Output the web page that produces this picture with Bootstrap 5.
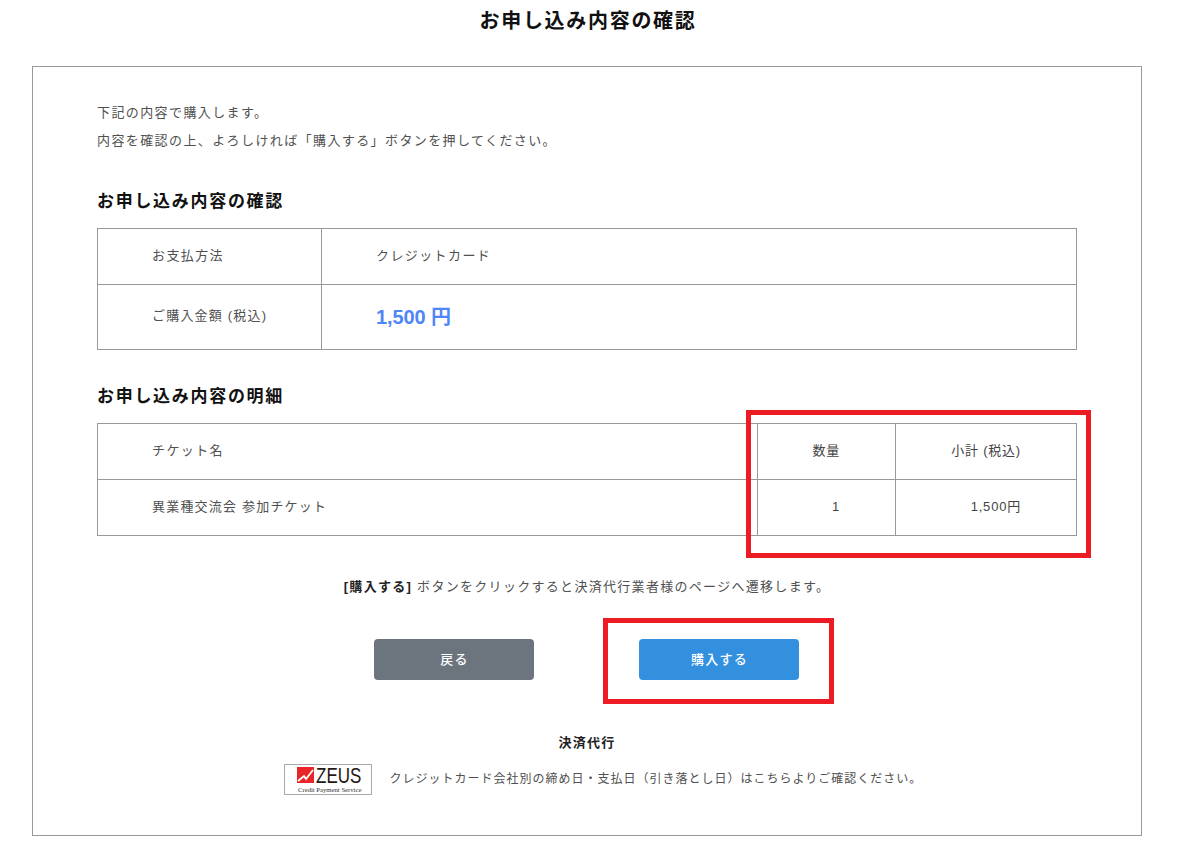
<!DOCTYPE html>
<html lang="ja">
<head>
    <meta charset="UTF-8">
    <meta name="viewport" content="width=device-width, initial-scale=1.0">
    <title>お申し込み内容の確認</title>
    <link rel="stylesheet" href="https://cdn.jsdelivr.net/npm/bootstrap@5.3.0/dist/css/bootstrap.min.css">
    <style>
        body {
            font-family: "Liberation Sans", "Noto Sans CJK JP", sans-serif;
            font-size: 13px;
            font-weight: 400;
            color: #505050;
            letter-spacing: 1.4px;
            background: #fff;
        }
        .page-wrap { position: relative; width: 1110px; margin-left: 32px; padding-top: 6px; }
        .page-title {
            font-size: 20px;
            font-weight: 700;
            color: #111;
            letter-spacing: 1.7px;
            line-height: 30px;
            margin: 0 0 30px;
            padding-left: 2px;
            text-align: center;
        }
        .confirm-box {
            border: 1px solid #999;
            height: 770px;
            padding: 32px 64px 0;
        }
        .intro-text { line-height: 28px; margin: 0; }
        .sec-title {
            font-size: 17px;
            font-weight: 700;
            color: #111;
            letter-spacing: 1.7px;
            line-height: 26px;
            margin: 34px 0 13px;
        }
        .info-table { width: 980px; border-collapse: collapse; table-layout: fixed; margin: 0; }
        .info-table td { border: 1px solid #999; padding: 0 0 2px 54px; height: 56px; vertical-align: middle; }
        .info-table .amount-row td { height: 65px; }
        .info-table td.tight { letter-spacing: 1.2px; }
        .info-table td.amount-cell { padding-bottom: 0; }
        .info-table .num { text-align: right; padding: 0 55px 2px 0; letter-spacing: .8px; color: #444; }
        .amount {
            color: #4f86f7;
            font-size: 20px;
            font-weight: 700;
            letter-spacing: -.1px;
        }
        .note-line { text-align: center; margin: 41px 0 0; line-height: 20px; letter-spacing: 1.3px; }
        .note-line strong { color: #222; }
        .btn-back, .btn-buy {
            width: 160px;
            height: 41px;
            font-size: 13px;
            font-weight: 500;
            letter-spacing: 1.3px;
            color: #fff;
            border: 0;
            border-radius: 4px;
            padding: 0 0 0 2px;
        }
        .btn-back { background: #6c757d; }
        .btn-buy { background: #3390df; }
        .btn-row { gap: 105px; margin-top: 42px; padding-right: 2px; }
        .agent-title { font-weight: 700; color: #222; text-align: center; margin: 53px 0 0; line-height: 20px; letter-spacing: 1.2px; }
        .agent-row { gap: 18px; margin-top: 11px; padding-left: 32px; font-size: 12px; letter-spacing: 1px; }
        .agent-row span { padding-bottom: 2px; }
        .red-frame { position: absolute; border: 5px solid #ed1c24; }
        .frame-table { left: 714px; top: 410px; width: 345px; height: 148px; }
        .frame-btn { left: 571px; top: 618px; width: 231px; height: 86px; }
    </style>
</head>
<body>
    <div class="page-wrap">
        <h1 class="page-title">お申し込み内容の確認</h1>
        <div class="confirm-box">
            <p class="intro-text">下記の内容で購入します。</p>
            <p class="intro-text">内容を確認の上、よろしければ「購入する」ボタンを押してください。</p>

            <h2 class="sec-title">お申し込み内容の確認</h2>
            <table class="info-table">
                <colgroup><col style="width:224px"><col></colgroup>
                <tr><td>お支払方法</td><td>クレジットカード</td></tr>
                <tr class="amount-row"><td class="tight">ご購入金額 (税込)</td><td class="amount-cell"><span class="amount">1,500 円</span></td></tr>
            </table>

            <h2 class="sec-title">お申し込み内容の明細</h2>
            <table class="info-table">
                <colgroup><col><col style="width:138px"><col style="width:181px"></colgroup>
                <tr><td>チケット名</td><td class="num">数量</td><td class="num">小計 (税込)</td></tr>
                <tr><td class="tight">異業種交流会 参加チケット</td><td class="num">1</td><td class="num">1,500円</td></tr>
            </table>

            <p class="note-line"><strong>[購入する]</strong> ボタンをクリックすると決済代行業者様のページへ遷移します。</p>

            <div class="d-flex justify-content-center btn-row">
                <button type="button" class="btn btn-back">戻る</button>
                <button type="button" class="btn btn-buy">購入する</button>
            </div>

            <p class="agent-title">決済代行</p>
            <div class="d-flex justify-content-center align-items-center agent-row">
                <svg width="88" height="31" viewBox="0 0 88 31">
                    <rect x=".5" y=".5" width="87" height="30" fill="#fff" stroke="#aaa"/>
                    <rect x="13" y="3" width="17" height="16" fill="#e8262a"/>
                    <path d="M14 17l6-5 2 3 7-9" fill="none" stroke="#fff" stroke-width="1.8"/>
                    <text transform="translate(32 19) scale(1 1.32)" font-family="Liberation Sans" font-size="17" fill="#231815" letter-spacing="0">ZEUS</text>
                    <text transform="translate(14 28) scale(1.03 1.1)" font-family="Liberation Serif" font-size="6.5" fill="#333" letter-spacing="0">Credit Payment Service</text>
                </svg>
                <span>クレジットカード会社別の締め日・支払日（引き落とし日）はこちらよりご確認ください。</span>
            </div>
        </div>
        <div class="red-frame frame-table"></div>
        <div class="red-frame frame-btn"></div>
    </div>
    <script src="https://cdn.jsdelivr.net/npm/bootstrap@5.3.0/dist/js/bootstrap.bundle.min.js"></script>
</body>
</html>
